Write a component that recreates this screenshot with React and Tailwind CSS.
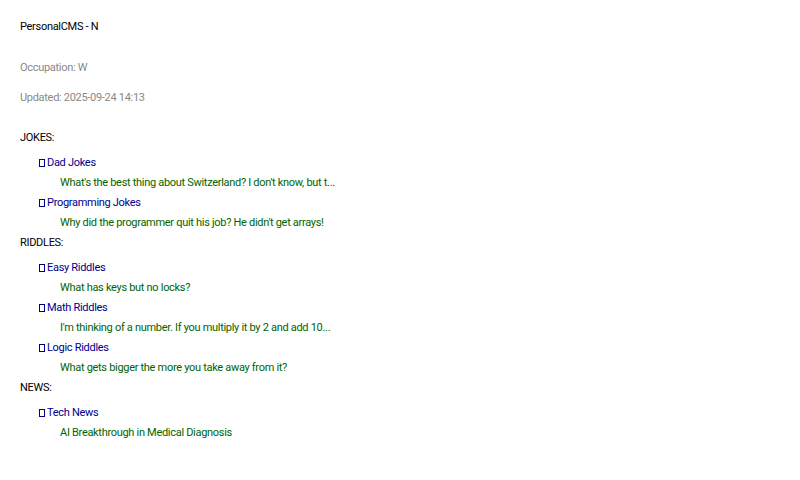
import React from 'react'

const sections = [
  {
    name: 'JOKES',
    cats: [
      { name: 'Dad Jokes', items: ["What's the best thing about Switzerland? I don't know, but t..."] },
      { name: 'Programming Jokes', items: ["Why did the programmer quit his job? He didn't get arrays!"] },
    ],
  },
  {
    name: 'RIDDLES',
    cats: [
      { name: 'Easy Riddles', items: ['What has keys but no locks?'] },
      { name: 'Math Riddles', items: ["I'm thinking of a number. If you multiply it by 2 and add 10..."] },
      { name: 'Logic Riddles', items: ['What gets bigger the more you take away from it?'] },
    ],
  },
  {
    name: 'NEWS',
    cats: [{ name: 'Tech News', items: ['AI Breakthrough in Medical Diagnosis'] }],
  },
]

export default function App() {
  return (
    <div className="w-[800px] h-[480px] bg-white px-[20px] pt-[17px] text-[11px] leading-[20px] tracking-[-0.3px] font-['Roboto',sans-serif]">
      <div className="text-black">PersonalCMS - N</div>
      <div className="mt-[21px] text-[#888]">Occupation: W</div>
      <div className="mt-[10px] text-[#888]">Updated: 2025-09-24 14:13</div>
      <div className="mt-[20px]">
        {sections.map(s => (
          <div key={s.name}>
            <div className="text-black mb-[5px]">{s.name}:</div>
            {s.cats.map(c => (
              <div key={c.name}>
                <div className="pl-[19px] h-[20px] flex items-center text-[#00008b]">
                  {/* missing-glyph box */}
                  <span className="inline-block w-[6px] h-[8px] border border-[#00008b] mr-[2px]" />
                  <span>{c.name}</span>
                </div>
                {c.items.map(it => (
                  <div key={it} className="pl-[40px] text-[#006400]">{it}</div>
                ))}
              </div>
            ))}
          </div>
        ))}
      </div>
    </div>
  )
}
